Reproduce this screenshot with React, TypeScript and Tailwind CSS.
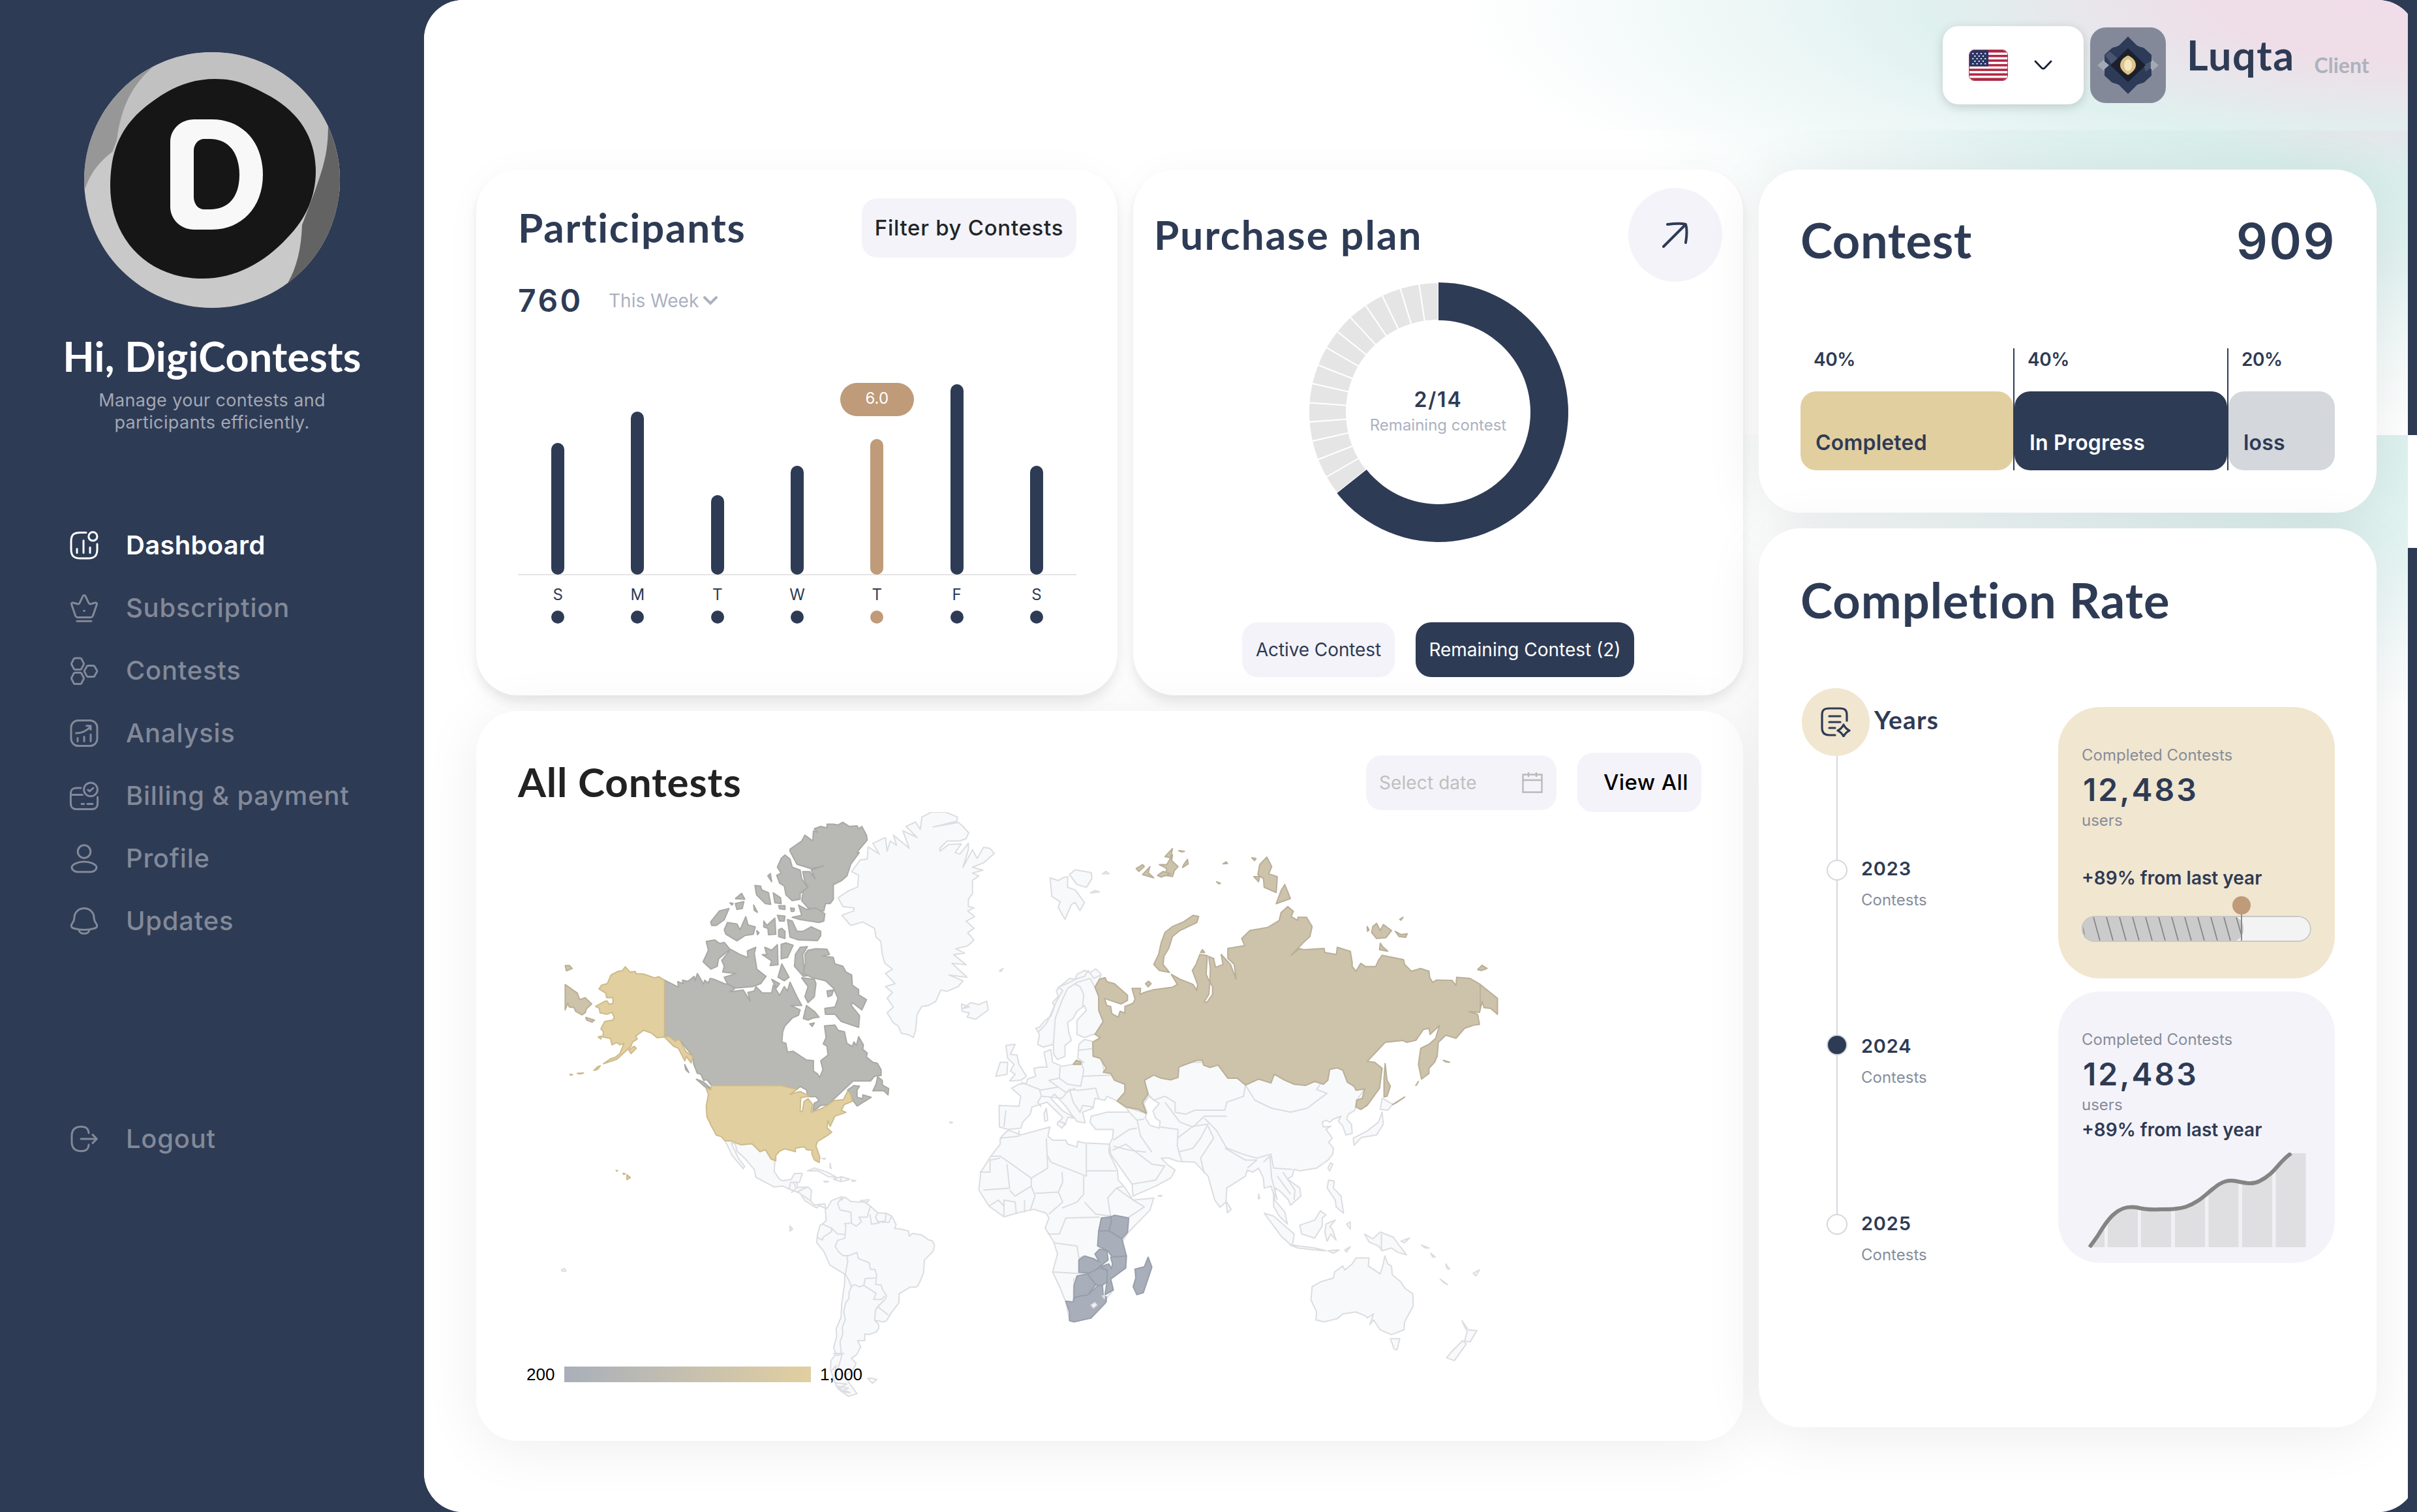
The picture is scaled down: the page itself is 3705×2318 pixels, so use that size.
import React from "react";

const NAVY = "#2e3b55";

/* ---------- Sidebar icons (24-unit grid) ---------- */
const iconShapes: Record<string, React.ReactNode> = {
  dashboard: (
    <>
      <path d="M13.5 2.2H9C4 2.2 2 4 2 9v6c0 5 2 7 7 7h6c5 0 7-2 7-7v-4" />
      <circle cx="18.7" cy="5.2" r="3.3" />
      <path d="M6.5 14.8v3M11.5 8.4v9.4M16.5 13.6v4.2" />
    </>
  ),
  subscription: (
    <>
      <path d="M17.2 19.2H6.8c-.6 0-1.1-.4-1.4-1L2.3 9.3c-.3-.9.4-1.5 1.2-1.3l3.2.9c.8.2 1.5-.1 1.9-.8l2.3-4.9c.5-1.3 1.7-1.3 2.2 0l2.3 4.9c.4.7 1.1 1 1.9.8l3.2-.9c.8-.2 1.5.4 1.2 1.3l-3.1 8.9c-.3.6-.8 1-1.4 1z" />
      <path d="M6.5 22.1h11M11.8 14.3h.4" />
    </>
  ),
  contests: (
    <>
      <path d="M5 2.5h4c.4 0 .7.2.9.5l1.7 3.3c.2.4.2.7 0 1.1L9.9 10.7c-.2.3-.5.5-.9.5H5c-.4 0-.7-.2-.9-.5L2.4 7.4c-.2-.4-.2-.7 0-1.1L4.1 3c.2-.3.5-.5.9-.5zM5 13.6h4c.4 0 .7.2.9.5l1.7 3.3c.2.4.2.7 0 1.1l-1.7 3.3c-.2.3-.5.5-.9.5H5c-.4 0-.7-.2-.9-.5l-1.7-3.3c-.2-.4-.2-.7 0-1.1l1.7-3.3c.2-.3.5-.5.9-.5zM15 8.2h4c.4 0 .7.2.9.5l1.9 3.2c.2.4.2.7 0 1.1l-1.9 3.3c-.2.3-.5.5-.9.5h-4c-.4 0-.7-.2-.9-.5L12.3 13c-.2-.4-.2-.7 0-1.1l1.8-3.2c.2-.3.5-.5.9-.5z" />
    </>
  ),
  analysis: (
    <>
      <rect x="2" y="2.2" width="20" height="19.6" rx="5.5" />
      <path d="M7 15.8v2.5M12 14.7v3.6M17 13v5.3M5.8 12c4.8-.1 8.5-2 11.2-5.2M13.8 6.4H17v2.8" />
    </>
  ),
  billing: (
    <>
      <path d="M9.5 6H6.5C3 6 1.7 7.3 1.7 10.8v6.7c0 3.5 1.3 4.8 4.8 4.8h11c3.5 0 4.8-1.3 4.8-4.8V13M1.7 11.2h9M10 18.3h1.8M14.5 18.3h4" />
      <circle cx="17" cy="7.2" r="5.2" />
      <path d="M14.9 7.4l1.3 1.2 2.8-2.6" />
    </>
  ),
  profile: (
    <>
      <circle cx="12" cy="6.8" r="4.9" />
      <path d="M12 14.5c4.5 0 9.5 2 9.5 4.4 0 1.9-2.5 3.5-4.5 3.5H7c-2 0-4.5-1.6-4.5-3.5 0-2.4 5-4.4 9.5-4.4z" />
    </>
  ),
  updates: (
    <>
      <path d="M12 2.3c-4.3 0-7.5 3.2-7.5 7 0 2.9-.9 3.4-2 5.1-.9 1.5-.2 2.7 1.5 3.2 5 1.5 11 1.5 16 0 1.7-.5 2.4-1.7 1.5-3.2-1.1-1.7-2-2.2-2-5.1 0-3.8-3.2-7-7.5-7z" />
      <path d="M8 18.8c.5 3.8 7.5 3.8 8 0" />
    </>
  ),
  logout: (
    <>
      <path d="M15.5 7.5c-.3-3.6-2.1-5.1-6.2-4.9C4.6 2.8 2.5 5 2.5 9.7v4.6c0 4.7 2.1 6.9 6.8 7.1 4.1.2 5.9-1.3 6.2-4.9" />
      <path d="M9.5 12h12M18.5 8.8l3.2 3.2-3.2 3.2" />
    </>
  ),
};

function NavItem({ icon, label, active }: { icon: string; label: string; active?: boolean }) {
  return (
    <a className={`flex h-12 items-center gap-[40px] ${active ? "text-white" : "text-[#828998]"}`}>
      <svg viewBox="0 0 24 24" className="size-12" fill="none" stroke="currentColor" strokeWidth="1.5" strokeLinecap="round" strokeLinejoin="round">
        {iconShapes[icon]}
      </svg>
      <span className={`text-[40px] leading-[48px] whitespace-nowrap ${active ? "font-semibold tracking-[0.3px]" : "font-medium tracking-[0.75px]"}`}>{label}</span>
    </a>
  );
}

function Sidebar() {
  const items = [
    ["dashboard", "Dashboard"],
    ["subscription", "Subscription"],
    ["contests", "Contests"],
    ["analysis", "Analysis"],
    ["billing", "Billing & payment"],
    ["profile", "Profile"],
    ["updates", "Updates"],
  ];
  return (
    <aside className="flex w-[650px] shrink-0 flex-col items-center">
      <svg viewBox="129 80 392 392" className="mt-20 size-[392px] shrink-0 overflow-hidden rounded-full">
        <rect x="129" y="80" width="392" height="392" fill="#c9c9c9" />
        <path d="M129 80H521V300L483 292L300 240L172 234Z" fill="#c1c1c1" />
        <path d="M110 60H260L235 102C205 128 186 160 179 215L172 233C155 246 140 262 131 288L110 290Z" fill="#979797" />
        <path d="M503 190C503 225 500 245 483 292L463 345C462 380 455 410 441 434L540 440V190Z" fill="#636363" />
        <path d="M330 121C365 121 385 132 415 148C462 175 484 215 484 263C484 300 470 335 440 365C405 403 360 427 311 427C225 427 169 365 169 285C169 225 190 190 225 162C258 136 290 121 330 121Z" fill="#161616" />
        <path fillRule="evenodd" fill="#f8f8f8" d="M298 183H325C370 183 403 216 403 268C403 318 370 352 325 352H298C277 352 261 336 261 317V218C261 198 277 183 298 183ZM313 213C304 213 297 221 297 231V302C297 313 304 321 313 321H322C350 321 367 302 367 268C367 234 350 213 322 213Z" />
      </svg>
      <h1 className="mt-[44px] font-[Lato,sans-serif] text-[63px] leading-[60px] font-bold tracking-[0.2px] whitespace-nowrap text-white">Hi, DigiContests</h1>
      <p className="mt-[21px] w-[380px] text-center text-[27px] leading-[34px] tracking-[0.35px] text-[#a3a8b3]">Manage your contests and participants efficiently.</p>
      <nav className="mt-[147px] flex w-full flex-col gap-12 pl-[105px]">
        {items.map(([icon, label], i) => (
          <NavItem key={label} icon={icon} label={label} active={i === 0} />
        ))}
      </nav>
      <div className="mt-[286px] w-full pl-[105px]">
        <NavItem icon="logout" label="Logout" />
      </div>
    </aside>
  );
}

/* ---------- Header ---------- */
function Flag() {
  return (
    <svg viewBox="0 0 60 57" preserveAspectRatio="none" className="h-12 w-[60px] rounded-lg border border-[#a8405a]">
      <rect width="60" height="57" fill="#fff" />
      {[0, 1, 2, 3, 4, 5, 6].map((i) => (
        <rect key={i} y={i * 8.77} width="60" height="4.4" fill="#b22542" />
      ))}
      <rect width="30" height="30.7" fill="#2a3566" />
      {[0, 1, 2, 3, 4].map((r) =>
        [0, 1, 2, 3].slice(0, r % 2 ? 3 : 4).map((c) => <circle key={`${r}${c}`} cx={5.5 + c * 6.5 + (r % 2) * 3.2} cy={6.5 + r * 4.8} r="1.3" fill="#fff" />),
      )}
    </svg>
  );
}

function Header() {
  return (
    <header className="flex h-[200px] items-center bg-[radial-gradient(ellipse_1500px_420px_at_3080px_0px,#f0dde9_0%,#efdde8_22%,#dff1ef_52%,#edf7f6_70%,#ffffff_100%)] pl-[2328px]">
      <button className="flex h-[120px] w-[216px] items-center gap-10 rounded-3xl bg-white pl-10 shadow-[0_4px_16px_rgba(0,0,0,0.16)]">
        <Flag />
        <svg viewBox="0 0 28 16" className="h-4 w-7" fill="none" stroke="#16213a" strokeWidth="2.8" strokeLinecap="round">
          <path d="M2 2l9.5 10c1.6 1.6 3.4 1.6 5 0L26 2" />
        </svg>
      </button>
      <div className="ml-[10px] flex size-[116px] items-center justify-center rounded-3xl bg-[#838999]">
        <svg viewBox="0 0 94 88" className="h-[88px] w-[94px]">
          <path d="M0 44l14-12 14 12-14 12zM66 44l14-12 14 12-14 12z" fill="#a5a9b5" />
          <path d="M47 0l13 13c3 3 9 3 12 5l11 10v10l-7 6 7 6v10L72 70c-3 2-9 2-12 5L47 88 34 75c-3-3-9-3-12-5L11 60V50l7-6-7-6V28l11-10c3-2 9-2 12-5z" fill="#2d3b58" />
          <path d="M12 29l7-6 14 12-10 9zM71 44l11-6v10l-8 6z" fill="#4a5670" />
          <path d="M47 18l27 26-27 26-27-26z" fill="#1b202c" />
          <path d="M47 29c7 3 12 8 12 15s-7 12-12 15c-5-3-12-8-12-15s5-12 12-15z" fill="#dfc386" />
          <ellipse cx="47" cy="44" rx="6" ry="9" fill="#f3e6c4" />
        </svg>
      </div>
      <div className="mb-[30px] ml-[32px] flex items-baseline gap-[30px] font-[Lato,sans-serif] font-bold">
        <span className="text-[63px] leading-[60px] tracking-[1.5px] text-[#2e3b55]">Luqta</span>
        <span className="relative top-1 text-[32px] leading-[40px] text-[#adb2bc]">Client</span>
      </div>
    </header>
  );
}

/* ---------- Participants ---------- */
const bars = [
  { d: "S", h: 202 },
  { d: "M", h: 250 },
  { d: "T", h: 122 },
  { d: "W", h: 167 },
  { d: "T", h: 208, tip: "6.0" },
  { d: "F", h: 292 },
  { d: "S", h: 167 },
];

function Participants() {
  return (
    <section className="h-[806px] w-[983px] rounded-[64px] bg-white pt-11 pr-[63px] pl-16 shadow-[0_10px_16px_rgba(0,0,0,0.08),0_4px_60px_rgba(0,0,0,0.03)]">
      <div className="flex items-center justify-between">
        <h2 className="-mt-1 font-[Lato,sans-serif] text-[62px] leading-[88px] font-bold tracking-[1.8px] text-[#2e3b55]">Participants</h2>
        <button className="h-[91px] w-[329px] rounded-3xl bg-[#f4f3f9] text-[33px] font-medium tracking-[0.7px] whitespace-nowrap text-[#212529]">Filter by Contests</button>
      </div>
      <div className="mt-[38px] flex h-14 items-center">
        <span className="w-[139px] text-[48px] font-semibold tracking-[3.5px] text-[#2e3b55]">760</span>
        <span className="text-[28px] whitespace-nowrap text-[#abb1bf]">This Week</span>
        <svg viewBox="0 0 24 16" className="ml-[6px] h-4 w-6" fill="none" stroke="#abb1bf" strokeWidth="4" strokeLinecap="round">
          <path d="M3 3l9 9 9-9" />
        </svg>
      </div>
      <div className="mt-[98px] flex h-[295px] items-end border-b-2 border-[#e5e5e5]">
        {bars.map((b, i) => (
          <div key={i} className="relative flex flex-1 flex-col items-center">
            {b.tip && <span className="absolute bottom-[242px] h-[51px] w-[113px] rounded-full bg-[#bf9b79] text-center text-[24px] leading-[48px] text-white">{b.tip}</span>}
            <div className={`-mb-[1px] w-5 rounded-full ${b.tip ? "bg-[#bf9b79]" : "bg-[#2e3b55]"}`} style={{ height: b.h }} />
          </div>
        ))}
      </div>
      <div className="mt-[14px] flex">
        {bars.map((b, i) => (
          <div key={i} className="flex flex-1 flex-col items-center gap-2">
            <span className="text-[24px] leading-8 text-[#2e3b55]">{b.d}</span>
            <span className={`size-5 rounded-full ${b.tip ? "bg-[#bf9b79]" : "bg-[#2e3b55]"}`} />
          </div>
        ))}
      </div>
    </section>
  );
}

/* ---------- Purchase plan ---------- */
function arc(a0: number, a1: number) {
  const p = (a: number, r: number) => {
    const t = ((a - 90) * Math.PI) / 180;
    return `${(200 + r * Math.cos(t)).toFixed(2)} ${(200 + r * Math.sin(t)).toFixed(2)}`;
  };
  const big = a1 - a0 > 180 ? 1 : 0;
  return `M${p(a0, 199)}A199 199 0 ${big} 1 ${p(a1, 199)}L${p(a1, 141)}A141 141 0 ${big} 0 ${p(a0, 141)}Z`;
}

function PurchasePlan() {
  const start = 231.43;
  const step = (360 - start) / 15;
  return (
    <section className="flex h-[806px] w-[935px] flex-col items-center rounded-[64px] bg-white pt-7 shadow-[0_10px_16px_rgba(0,0,0,0.08),0_4px_60px_rgba(0,0,0,0.03)]">
      <div className="flex w-full items-center justify-between pr-8 pl-8">
        <h2 className="-mt-[2px] font-[Lato,sans-serif] text-[62px] leading-[80px] font-bold tracking-[2.1px] whitespace-nowrap text-[#2e3b55]">Purchase plan</h2>
        <div className="flex size-36 items-center justify-center rounded-full bg-[#f4f3f9]">
          <svg viewBox="0 0 40 40" className="size-10" fill="none" stroke={NAVY} strokeWidth="4" strokeLinecap="round" strokeLinejoin="round">
            <path d="M2 38L36 4M8 4C20 2.500 30 2 36 4C38 10 38 20 36 32" />
          </svg>
        </div>
      </div>
      <div className="grid size-[400px] place-items-center">
        <svg viewBox="0 0 400 400" className="col-start-1 row-start-1 size-[400px]">
          {Array.from({ length: 15 }, (_, i) => (
            <path key={i} d={arc(start + i * step, start + (i + 1) * step)} fill="#e5e5e5" stroke="#fff" strokeWidth="2" />
          ))}
          <path d={arc(0, start)} fill={NAVY} />
        </svg>
        <div className="z-10 col-start-1 row-start-1 mt-[2px] text-center">
          <div className="text-[32px] leading-[38px] font-semibold tracking-[1.8px] text-[#2e3b55]">2/14</div>
          <div className="text-[24px] leading-[40px] text-[#abb1bf]">Remaining contest</div>
        </div>
      </div>
      <div className="mt-[122px] flex gap-8">
        <button className="h-[84px] w-[234px] rounded-3xl bg-[#f4f3f9] text-[28px] tracking-[-0.1px] whitespace-nowrap text-[#2e3b55]">Active Contest</button>
        <button className="h-[84px] w-[335px] rounded-3xl bg-[#2e3b55] text-[28px] whitespace-nowrap text-white">Remaining Contest (2)</button>
      </div>
    </section>
  );
}

/* ---------- World map ---------- */
const northAmerica = {
  land: [
    "1295,101 1340,101 1378,118 1375,132 1300,152 1380,136 1395,150 1413,172 1405,192 1385,200 1345,200 1322,225 1322,235 1350,212 1390,210 1370,240 1385,245 1412,208 1412,230 1395,290 1420,240 1425,230 1440,260 1460,222 1480,225 1494,243 1460,275 1425,290 1458,300 1425,310 1445,320 1425,335 1425,380 1412,400 1412,425 1430,430 1410,440 1432,460 1405,475 1430,500 1410,515 1430,540 1410,560 1372,570 1400,585 1365,590 1405,625 1360,620 1408,668 1350,660 1395,680 1380,700 1345,716 1325,712 1308,752 1285,765 1265,768 1250,795 1245,850 1238,875 1222,865 1200,860 1190,835 1175,825 1155,790 1175,770 1155,740 1172,720 1150,700 1180,690 1150,655 1172,640 1148,620 1140,590 1135,545 1120,530 1115,500 1078,478 1040,490 1012,455 1050,440 1050,430 1015,425 1000,395 1035,370 1062,358 1065,318 1043,305 1070,265 1092,262 1095,220 1130,245 1110,208 1150,188 1155,235 1165,200 1185,215 1175,180 1225,225 1205,165 1250,188 1215,150 1245,135 1260,160 1265,118",
    "1390,760 1415,770 1395,775 1420,755 1445,762 1470,750 1475,780 1435,812 1408,805 1415,790 1392,785",
    "643,1230 662,1230 692,1243 728,1240 753,1267 770,1260 788,1292 800,1298 798,1335 815,1362 825,1367 852,1362 862,1342 887,1342 878,1372 860,1373 845,1395 825,1385 798,1388 740,1355 735,1328 705,1290 680,1265 675,1240 662,1237 685,1290 705,1318 700,1325 665,1280",
    "845,1395 850,1372 870,1372 872,1390 905,1388 916,1400 913,1435 925,1450 958,1446 962,1462 940,1452 932,1460 895,1435 880,1410",
    "903,1333 925,1323 965,1337 995,1355 970,1353 935,1332",
    "985,1362 1010,1353 1037,1362 1010,1370",
    "955,1368 970,1370 960,1372",
    "1043,1364 1056,1367 1045,1369",
    "948,1290 960,1290 958,1293",
    "975,1307 978,1325 974,1320",
    "848,1523 856,1532 850,1538",
    "1353,1165 1362,1167 1356,1169",
    "1510,646 1522,638 1516,648",
    "1070,1435 1098,1432 1092,1442",
  ],
  lines: ["870,1390 852,1408", "870,1405 905,1388", "885,1415 912,1435", "860,1373 866,1390", "1010,1353 1008,1370"],
  usa: [
    "582,1048 597,1055 600,1040 820,1040 870,1053 848,1070 880,1060 910,1076 882,1082 880,1128 887,1130 892,1095 905,1085 920,1105 914,1132 945,1120 970,1105 985,1092 1017,1088 1030,1060 1038,1065 1046,1094 1020,1105 1010,1125 1025,1132 990,1145 975,1180 968,1160 965,1185 980,1200 965,1212 935,1232 930,1248 942,1285 940,1304 925,1295 917,1275 918,1262 900,1260 893,1250 865,1255 865,1267 832,1257 815,1265 803,1280 803,1298 788,1292 770,1260 753,1267 728,1240 692,1243 662,1230 643,1230 630,1215 615,1210 600,1180 585,1147 583,1110 590,1070",
    "451,678 433,666 420,670 385,657 362,656 358,648 342,650 327,632 318,645 303,648 282,660 270,690 252,695 244,708 265,722 268,738 288,738 288,758 275,760 270,750 263,750 233,768 245,775 247,790 270,795 285,788 292,805 288,815 262,820 250,845 258,855 256,873 280,878 285,900 300,892 310,900 323,895 310,930 295,943 280,948 258,965 300,950 345,905 350,890 365,880 360,870 385,850 410,860 428,876 451,873 480,905 495,912 515,955 520,940 535,962 541,940 520,925 497,880 485,888 467,872 451,870",
    "338,918 355,905 362,912 345,930",
    "228,988 240,975 248,972 240,984",
    "152,1001 160,1002 155,1005",
    "175,998 195,997 185,1000",
    "332,1346 343,1356 332,1363",
    "298,1331 303,1332 300,1334",
    "320,1341 327,1343 322,1345",
    "241,873 252,870 250,880",
  ],
  canada: [
    "451,678 495,702 493,683 510,690 508,678 525,682 545,665 548,680 555,655 575,692 578,678 590,688 595,672 608,675 640,690 665,695 672,708 658,718 700,712 722,750 715,720 735,715 740,700 760,722 790,722 795,695 815,730 830,700 840,715 848,685 870,735 885,765 850,765 880,780 875,798 855,808 832,835 825,855 822,890 835,895 840,925 858,922 900,952 922,954 922,990 935,1000 942,1012 952,985 945,955 968,935 965,905 953,897 962,875 957,835 990,832 1000,850 1020,855 1028,895 1045,905 1050,890 1058,902 1065,872 1080,900 1078,915 1092,928 1090,942 1110,960 1124,963 1136,985 1136,1005 1115,1008 1103,1024 1048,1024 985,1088 970,1105 945,1108 920,1130 925,1100 940,1092 930,1078 905,1078 900,1055 880,1043 870,1053 822,1042 600,1040 585,1020 575,1022 565,1000 555,998 543,965 541,940 497,880 485,888 467,872 451,870",
    "1015,136 1035,150 1060,148 1065,158 1075,150 1090,180 1092,197 1068,228 1060,240 1067,240 1040,280 1028,320 1010,337 985,350 985,400 975,415 960,415 955,440 920,438 905,430 885,405 890,370 905,358 895,340 888,305 910,305 928,330 915,300 955,285 915,295 870,280 848,235 848,228 885,200 895,180 920,200 922,165 935,170 925,158 945,150 965,155 965,142 985,142 1000,145",
    "832,248 848,262 855,290 880,300 885,330 903,360 880,380 880,400 855,405 835,385 830,355 815,345 806,318 820,310 808,290 820,260",
    "737,353 755,355 758,368 780,378 787,418 770,415 742,385",
    "795,378 818,395 820,415 800,412",
    "675,398 695,380 705,400",
    "675,415 702,408 697,432 680,435",
    "597,478 625,440 655,432 640,470 615,490 600,490",
    "640,505 650,480 680,485 690,505 708,460 715,488 738,495 732,520 705,525 680,543 645,520",
    "765,475 775,490 800,465 803,520 780,522 778,500 765,495",
    "840,470 855,475 870,510 890,510 915,495 945,510 945,525 935,542 875,540 848,530",
    "855,462 885,455 875,420 900,435 930,430 958,450 955,475 940,480 880,470",
    "808,455 832,458 830,475 815,475",
    "812,505 822,500 832,510 832,535 812,528",
    "778,320 786,312 790,340",
    "812,422 832,422 832,435 815,433",
    "733,420 745,445 735,438",
    "850,430 862,432 860,442 852,442",
    "658,412 668,415 664,420",
    "743,508 750,515 745,522",
    "583,545 610,540 625,552 640,548 658,572 622,605 618,630 598,640 573,615 590,575",
    "632,610 660,572 690,590 715,600 713,578 740,565 735,585 743,640 772,665 755,690 730,700 675,705 650,690 640,668 678,655 635,650 640,630",
    "760,590 775,590 768,565 790,575 808,556 810,625 785,628 790,612",
    "820,555 835,550 858,558 840,600 820,605",
    "822,622 845,668 830,680 810,668",
    "880,565 903,563 888,590 893,640 915,660 890,665 862,630 865,590",
    "905,575 930,570 965,572 973,590 950,595 985,600 990,622 1015,630 1025,650 1043,660 1045,695 1065,710 1065,728 1090,745 1075,780 1045,755 1042,765 1068,800 1065,840 1010,820 990,795 960,795 958,775 990,770 1000,740 985,705 960,680 920,670 890,655 897,620 895,590",
    "885,670 925,675 930,690 925,735 905,755 895,735 905,700",
    "900,765 925,785 940,805 920,808 905,815 890,810",
    "790,675 815,690 805,705",
    "965,715 985,712 980,730 968,735",
    "910,828 925,825 918,837",
    "1125,1010 1140,1022 1140,1038 1160,1050 1158,1072 1145,1058 1110,1058 1120,1035",
    "1030,1055 1050,1040 1068,1042 1060,1055 1060,1080 1078,1085 1078,1072 1105,1080 1060,1110 1050,1095",
    "552,1018 575,1028 598,1050 580,1045",
    "515,968 528,995 518,985",
  ],
  russia: ["137,693 175,722 183,745 200,738 221,760 205,775 200,790 190,797 170,785 165,772 150,770 145,757 137,780", "137,628 151,628 159,638 141,646", "202,806 230,815 222,822 205,815"],
};

const southAmerica = {
  land: [
    "1162,155 1175,122 1210,103 1207,120 1218,105 1237,125 1260,128 1282,128 1302,148 1325,178 1352,180 1370,192 1385,232 1380,250 1400,253 1425,262 1428,285 1438,273 1468,280 1490,302 1503,307 1510,330 1505,355 1477,395 1474,455 1458,508 1450,520 1430,520 1395,550 1394,592 1368,640 1355,672 1345,680 1315,672 1328,690 1329,708 1320,727 1295,738 1283,735 1283,766 1260,766 1270,795 1257,830 1240,848 1255,870 1245,900 1220,925 1232,960 1258,1010 1230,1022 1195,985 1185,955 1172,900 1173,860 1190,825 1182,800 1192,745 1190,712 1206,660 1208,600 1218,500 1218,460 1170,418 1150,355 1127,315 1130,275 1138,235 1145,230 1158,213 1155,162",
    "1293,940 1305,938 1322,945 1308,962",
    "1040,238 1048,252 1040,262",
    "298,440 308,434 313,446 300,446",
  ],
  lines: [
    "1145,230 1175,248 1195,275 1220,277 1218,295 1195,305 1187,333 1200,360 1213,375 1232,375 1258,360 1262,388 1298,408 1301,437 1316,438 1322,465 1318,508 1336,510 1342,533 1354,560 1350,575 1325,610 1360,648",
    "1220,277 1222,240 1218,228 1240,225 1238,175 1203,165 1195,135 1210,103",
    "1240,225 1255,240 1272,220 1265,198 1292,197 1295,175 1302,148",
    "1300,185 1305,230 1330,225 1318,200 1325,178",
    "1352,180 1350,215 1325,220 1362,222 1370,192",
    "1127,290 1145,303 1150,288 1175,265 1175,248",
    "1225,378 1228,400 1224,430 1220,460 1232,490 1240,518 1250,508 1265,518 1280,512 1285,480 1318,478",
    "1280,512 1320,548 1312,577 1337,577 1348,560",
    "1325,610 1318,625 1315,672",
    "1240,518 1232,545 1232,572 1222,590 1215,630 1220,670 1210,705 1212,735 1203,770 1208,840 1195,900",
    "1185,960 1225,965 1200,985 1235,1005 1205,1000 1230,985 1190,975",
    "1175,905 1190,880 1185,930",
    "1180,825 1215,825 1190,835",
  ],
};

const oldWorld = {
  land: [
    "240,615 250,612 265,595 280,585 290,560 285,550 300,535 295,520 305,510 330,490 345,492 350,480 370,470 385,476 400,466 415,480 410,492 398,512 408,535 408,570 420,598 400,628 370,638 350,630 350,595 375,570 370,558 350,572 340,590 325,600 328,625 335,645 318,658 318,685 298,693 288,680 287,655 260,662 245,655 250,630",
    "355,655 370,643 395,648 395,685 415,690 422,720 440,728 478,755 478,775 457,797 430,785 425,795 398,790 393,815 365,825 372,852 350,848 335,830 320,810 290,780 280,790 310,820 345,840 325,838 318,858 300,852 312,838 270,800 230,812 225,830 205,850 200,865 165,868 143,862 142,808 195,810 200,785 175,765 195,755 215,752 218,742 240,735 235,715 250,712 270,712 262,675 280,668 285,700 310,710 340,705 368,700 352,690",
    "160,658 185,655 172,680 190,682 195,705 215,735 200,745 170,747 185,730 172,722 182,705 165,690",
    "133,735 145,700 165,700 163,730",
    "535,828 525,800 540,780 530,745 600,700 1060,700 1125,720 1118,767 1097,795 1092,820 1075,830 1070,842 1083,855 1085,878 1068,882 1060,860 1048,848 1055,835 1035,842 1025,850 1015,845 1005,850 1008,862 1028,860 1015,868 1032,890 1022,900 1035,915 1033,930 1020,945 990,965 945,972 930,968 925,985 912,992 945,1015 948,1035 920,1058 915,1045 895,1025 880,1015 878,1045 905,1075 912,1105 890,1085 875,1060 875,1030 868,1010 850,1015 848,990 835,965 820,975 805,970 800,985 750,1015 748,1050 732,1063 718,1045 700,985 680,965 665,950 620,948 595,940 575,940 590,955 612,970 600,990 560,1010 500,1035 497,1005 440,930 437,905 445,890 447,868 400,868 385,850 388,835 430,825 490,825 480,812",
    "168,870 200,882 278,862 272,885 285,895 320,895 325,905 350,912 352,898 370,902 437,905 435,925 458,970 460,995 475,1010 500,1045 555,1040 545,1070 488,1125 470,1150 482,1190 480,1215 440,1243 447,1270 430,1290 425,1305 388,1340 342,1350 330,1345 320,1300 305,1265 285,1225 298,1180 288,1150 265,1115 275,1090 268,1078 235,1068 200,1075 155,1087 115,1060 88,1020 93,975 120,935 145,905 145,890 160,875",
    "748,1048 762,1068 752,1077",
    "850,1078 875,1085 930,1130 925,1160 895,1135",
    "918,1157 985,1165 1015,1172 985,1170 940,1165",
    "945,1108 985,1095 1000,1072 1015,1082 1005,1090 1005,1110 985,1140 950,1130",
    "1015,1105 1040,1095 1025,1112 1032,1118 1042,1145 1028,1130 1018,1148 1012,1125",
    "1118,1130 1140,1142 1160,1125 1195,1138 1210,1158 1230,1182 1205,1175 1190,1165 1165,1172 1155,1160 1130,1150",
    "1215,1148 1238,1140 1225,1152",
    "1022,995 1037,997 1035,1015 1055,1035 1062,1078 1042,1062 1040,1045 1018,1015",
    "1027,952 1033,955 1025,972 1020,965",
    "1165,790 1193,805 1180,820 1160,818",
    "1165,825 1168,855 1150,882 1110,888 1090,908 1088,890 1125,872 1155,850",
    "1378,1347 1395,1370 1418,1372 1400,1400 1385,1398 1392,1375",
    "1380,1397 1390,1405 1358,1447 1337,1440 1350,1425",
    "1172,1185 1180,1205 1190,1210 1192,1232 1215,1250 1225,1265 1247,1280 1248,1310 1225,1350 1223,1370 1190,1382 1160,1370 1142,1345 1132,1357 1142,1330 1125,1340 1120,1335 1095,1325 1060,1330 1045,1342 1010,1350 988,1345 990,1325 975,1295 978,1262 1000,1250 1035,1240 1038,1225 1060,1210 1065,1220 1085,1205 1095,1190 1130,1190 1128,1210 1160,1230 1168,1205",
    "1187,1392 1212,1392 1205,1420 1197,1418",
    "278,238 300,245 312,238 325,235 325,262 345,268 370,300 358,320 345,300 335,305 318,342 300,312 305,298 283,285",
    "330,230 345,218 388,225 390,240 375,262 350,255",
    "262,830 268,815 272,845 264,848",
    "300,848 318,853 310,865 297,855",
    "1270,1158 1290,1165 1280,1165",
    "1295,1178 1307,1188 1300,1188",
    "1335,1205 1345,1218 1338,1216",
    "1320,1243 1340,1257 1330,1252",
    "1408,1228 1425,1220 1415,1235",
    "418,228 428,222 436,228",
    "386,276 398,270 410,273",
    "835,1030 838,1040 835,1042",
    "567,1034 577,1034 572,1036",
    "1020,1172 1050,1170 1035,1178",
    "1065,1170 1080,1162 1070,1175",
    "1070,1105 1080,1100 1080,1118",
  ],
  lines: [
    "287,655 292,590 310,545 325,515 350,500 385,490 398,512",
    "365,562 368,530 358,510 345,505",
    "245,625 262,610 270,600 295,548 312,520 300,512 330,500 345,492 370,485 380,470 395,490 412,482",
    "200,750 250,768 255,785 245,800 255,812",
    "305,712 303,740 275,745 300,762 250,770",
    "303,740 325,755 360,760 368,720 362,702",
    "255,785 310,790 330,768 355,770 400,765 408,790",
    "160,820 155,862",
    "330,768 340,800 358,825 365,808 395,812",
    "365,735 440,732",
    "355,670 395,665",
    "300,762 320,775 345,765",
    "120,935 145,935 228,990 272,965 268,890",
    "272,935 280,950 375,985 375,905",
    "375,972 455,972",
    "145,890 195,885 195,870",
    "90,975 118,975 118,945 145,940",
    "163,955 170,1015 100,1020",
    "228,990 228,1010 185,1035 170,1020",
    "228,1010 238,1035 225,1070",
    "310,975 312,1000 300,1025 238,1028",
    "368,985 368,1030 350,1050 310,1065",
    "300,1025 312,1050 275,1080",
    "370,1050 400,1080 440,1085 432,1040 455,1015 475,1010",
    "455,1015 500,1045 530,1062 485,1090",
    "272,1130 303,1130 320,1090 410,1088",
    "288,1152 350,1160 355,1190 370,1185",
    "285,1225 375,1230",
    "340,1300 342,1240",
    "155,1085 155,1045 185,1050 188,1080",
    "210,1076 210,1045",
    "115,1060 140,1045 155,1060",
    "540,780 555,795 585,785 612,800 612,825 640,830 665,820 745,820 750,800 795,785 800,757",
    "585,800 625,850 660,862 690,835 750,835",
    "800,757 825,795 870,815 920,825 965,815 1000,790 1018,778 990,768 1000,755",
    "690,840 722,870 750,915 800,932 830,940 868,930 875,965 925,968",
    "510,842 520,885 550,925",
    "572,862 620,868 618,910 630,948",
    "618,890 660,860 700,855 680,890 660,915 620,925",
    "700,860 715,890 680,940 690,978",
    "447,895 490,868 510,865",
    "447,910 490,920 535,925",
    "445,920 480,905 550,955 585,960",
    "497,1005 560,995 585,958",
    "745,915 800,945 830,945 805,965",
    "848,950 865,935 870,990 885,1045",
    "885,985 920,1030",
    "900,975 932,1020 930,1045",
    "490,825 510,845 530,842",
    "1163,1130 1163,1170",
  ],
  russia: [
    "398,512 410,492 425,488 430,498 450,503 485,532 485,545 468,554 423,540 430,558 440,560 443,578 460,587 465,572 478,577 478,560 500,552 505,542 497,515 520,515 518,530 530,525 555,518 605,512 618,505 602,480 625,492 660,505 670,520 672,505 658,470 668,455 678,430 698,433 695,480 705,500 702,530 690,548 697,550 712,530 712,510 705,500 706,465 702,435 715,440 720,462 740,455 735,430 760,455 775,492 770,455 753,440 753,415 798,408 790,390 812,370 860,362 890,345 895,325 913,310 928,322 922,335 940,345 940,337 963,337 978,360 972,385 955,400 922,432 945,415 955,418 1010,415 1012,425 1043,430 1045,412 1080,422 1085,450 1085,460 1095,472 1108,452 1120,460 1148,460 1155,445 1165,432 1222,443 1225,455 1243,472 1268,465 1290,472 1292,488 1300,500 1310,494 1352,495 1362,508 1364,487 1400,490 1427,505 1460,530 1473,540 1473,580 1455,565 1437,563 1432,548 1425,575 1397,573 1420,580 1425,605 1410,607 1385,615 1362,640 1335,632 1315,650 1312,685 1305,700 1290,715 1290,728 1270,742 1262,705 1268,665 1290,655 1308,640 1318,608 1293,630 1290,615 1275,618 1255,645 1230,650 1220,645 1173,650 1125,698 1145,700 1165,715 1158,765 1125,808 1108,818 1095,812 1097,795 1112,790 1118,767 1095,770 1090,760 1072,750 1060,720 1045,714 1025,718 1020,745 1008,755 985,748 960,758 930,755 905,745 877,730 868,752 835,742 800,757 778,740 753,740 727,707 705,713 688,707 685,695 670,695 622,712 620,738 600,744 575,740 555,732 530,745 540,780 525,800 535,828 515,818 480,812 457,797 478,775 478,755 450,745 440,728 420,725 428,715 412,690 393,685 392,650 412,638 398,630 420,598 408,570 408,535",
    "1173,703 1178,745 1187,760 1178,785 1170,787 1170,740",
    "555,455 568,430 575,400 585,375 605,360 635,348 660,332 675,335 670,350 625,370 605,385 595,415 582,435 580,455 597,475 570,470",
    "857,186 870,210 862,228 885,235 882,275 850,262 848,240 833,230 838,205",
    "905,255 920,290 882,303 895,270",
    "822,235 838,235 835,248",
    "508,215 525,205 530,210 515,222",
    "525,230 545,210 540,225 555,238",
    "570,205 590,205 605,180 603,195 620,210 610,220 605,235 585,232 590,215",
    "585,185 605,165 600,188",
    "565,232 580,222 600,228 575,236",
    "622,170 637,172 628,173",
    "635,205 645,192 647,203 632,212",
    "740,203 748,198 752,202",
    "723,248 733,252 728,253",
    "817,188 828,190 824,195",
    "1140,360 1150,352 1160,370 1168,355 1190,370 1175,388 1150,390 1137,375",
    "1125,360 1130,368 1126,372",
    "1212,342 1221,337 1215,344",
    "1200,372 1215,380 1232,378 1228,387 1210,385",
    "1160,402 1168,412 1180,422 1158,418",
    "1420,468 1432,457 1445,465 1430,470",
    "340,705 348,695 360,699 360,705",
    "533,503 541,497 548,503 540,511",
    "1193,806 1225,787 1205,800",
    "1255,758 1262,748 1257,756",
    "1328,695 1345,700 1335,699",
    "680,425 685,418 691,425",
  ],
  africa: [
    "415,1090 440,1087 442,1100 435,1122 408,1122",
    "440,1087 450,1083 488,1090 485,1125 470,1142 435,1122 442,1100",
    "408,1122 435,1122 470,1142 482,1185 445,1188 432,1172 405,1160",
    "355,1195 370,1185 395,1192 410,1200 398,1180 410,1168 430,1172 433,1195 410,1212 390,1228 355,1226",
    "440,1188 482,1185 480,1215 440,1243 447,1270 425,1282 430,1250 430,1220 412,1212 435,1205 442,1217 445,1205",
    "378,1230 410,1215 430,1220 430,1250 415,1260 400,1257",
    "350,1235 378,1230 400,1257 378,1283 360,1285 342,1290 342,1260",
    "320,1298 340,1300 342,1290 360,1285 378,1283 405,1260 418,1258 420,1285 428,1287 428,1300 388,1340 342,1350 330,1347 330,1325",
    "540,1188 550,1213 527,1277 510,1282 500,1262 507,1240 505,1218 530,1212",
  ],
};

function Shapes({ list, fill, stroke }: { list: string[]; fill: string; stroke: string }) {
  return (
    <g fill={fill} stroke={stroke} strokeWidth="2">
      {list.map((p, i) => (
        <polygon key={i} points={p} vectorEffect="non-scaling-stroke" />
      ))}
    </g>
  );
}

function Lines({ list }: { list: string[] }) {
  return (
    <g fill="none" stroke="#dcdde0" strokeWidth="2">
      {list.map((p, i) => (
        <polyline key={i} points={p} vectorEffect="non-scaling-stroke" />
      ))}
    </g>
  );
}

function WorldMap() {
  const land = { fill: "#f8f9fb", stroke: "#dcdde0" };
  return (
    <svg viewBox="794 1245 1814 900" className="h-[900px] w-[1814px]" strokeLinejoin="round">
      <g transform="translate(1450 1200) scale(.57398 .61224)">
        <Shapes list={oldWorld.land} {...land} />
        <Lines list={oldWorld.lines} />
        <Shapes list={["543,785 555,795 570,803 553,822 560,840 572,848 570,865 545,858 532,838 537,825 528,803"]} fill="#fff" stroke="#dcdde0" />
        <Shapes list={oldWorld.russia} fill="#cdc2aa" stroke="#b9af97" />
        <line x1="1427" y1="505" x2="1427" y2="570" stroke="#b9af97" strokeWidth="3" />
        <Shapes list={oldWorld.africa} fill="#a9afba" stroke="#989eaa" />
        <Shapes list={["388,1308 398,1302 403,1308 394,1315", "418,1285 424,1284 423,1291"]} {...land} />
      </g>
      <g transform="translate(720 1800) scale(.47194 .33333)">
        <Shapes list={southAmerica.land} {...land} />
        <Lines list={southAmerica.lines} />
      </g>
      <g transform="translate(800 1200) scale(.48469 .44643)">
        <Shapes list={northAmerica.land} {...land} />
        <Lines list={northAmerica.lines} />
        <Shapes list={northAmerica.canada} fill="#b8b9b4" stroke="#a8a9a4" />
        <Shapes list={northAmerica.usa} fill="#e2cfa0" stroke="#cdbb8c" />
        <Shapes list={northAmerica.russia} fill="#cdc2aa" stroke="#b9af97" />
      </g>
    </svg>
  );
}

function AllContests() {
  return (
    <section className="h-[1119px] rounded-[64px] bg-white px-16 pt-16 shadow-[0_10px_90px_rgba(0,0,0,0.07)]">
      <div className="flex h-[91px] items-center">
        <h2 className="-mt-1 font-[Lato,sans-serif] text-[62px] leading-[80px] font-bold tracking-[0.8px] whitespace-nowrap text-[#222222]">All Contests</h2>
        <div className="ml-auto flex h-[84px] w-[292px] items-center justify-between rounded-3xl bg-[#f4f3f9] pr-[21px] pl-5 text-[28px] tracking-[0.1px] whitespace-nowrap text-[#bfbfbf]">
          Select date
          <svg viewBox="0 0 32 34" className="h-[34px] w-8" fill="none" stroke="#b9b9ba" strokeWidth="2.4">
            <path d="M1.5 4.5h29v27h-29zM1.5 13h29M10 1v7M22 1v7" />
          </svg>
        </div>
        <button className="ml-8 h-[91px] w-[190px] rounded-3xl bg-[#f4f3f9] pr-[20px] text-right text-[33px] font-medium tracking-[0.4px] whitespace-nowrap text-black">View All</button>
      </div>
      <div className="relative">
        <WorldMap />
        <div className="absolute bottom-[26px] left-[13px] flex h-6 items-center font-['Liberation_Sans',Arial,sans-serif] text-[26px] leading-6 text-black">
          <span className="w-[58px]">200</span>
          <span className="h-6 w-[378px] bg-linear-to-r from-[#a9afba] to-[#e2cfa0]" />
          <span className="ml-[14px]">1,000</span>
        </div>
      </div>
    </section>
  );
}

/* ---------- Contest summary ---------- */
function ContestSummary() {
  const parts = [
    { pct: "40%", label: "Completed", box: "w-[326px]", fill: "bg-[#e2cfa0] text-[#2e3b55]", rule: "" },
    { pct: "40%", label: "In Progress", box: "w-[328px]", fill: "bg-[#2e3b55] text-white", rule: "border-l-2 border-[#2e3b55]" },
    { pct: "20%", label: "loss", box: "w-[165px]", fill: "bg-[#d4d7dc] text-[#2e3b55]", rule: "border-l-2 border-[#2e3b55]" },
  ];
  return (
    <section className="h-[526px] rounded-[64px] bg-white px-16 pt-[66px] shadow-[0_10px_90px_rgba(0,0,0,0.08)]">
      <div className="-mt-[2px] flex items-center justify-between text-[#2e3b55]">
        <h2 className="font-[Lato,sans-serif] text-[74px] leading-[88px] font-bold tracking-[0.6px]">Contest</h2>
        <span className="-mr-[2px] pt-1 text-[75px] leading-[84px] font-semibold tracking-[2.5px]">909</span>
      </div>
      <div className="mt-[122px] flex">
        {parts.map((p) => (
          <div key={p.label} className={`${p.box} h-[187px] ${p.rule}`}>
            <div className="h-[66px] pl-5 text-[28px] leading-[34px] font-semibold tracking-[-0.4px] text-[#2e3b55]">{p.pct}</div>
            <div className={`flex h-[121px] items-end rounded-3xl pb-[22px] pl-[23px] text-[32px] leading-10 font-semibold tracking-[0.2px] whitespace-nowrap ${p.fill}`}>{p.label}</div>
          </div>
        ))}
      </div>
    </section>
  );
}

/* ---------- Completion rate ---------- */
const years = [
  { y: "2023", h: "h-[268px]", dot: "bg-white", text: "-mt-[2px]" },
  { y: "2024", h: "h-[275px]", dot: "bg-[#2e3b55]", text: "mt-[2px]" },
  { y: "2025", h: "h-8", dot: "bg-white", text: "-mt-[1px]" },
];

function Timeline() {
  return (
    <div className="w-[395px]">
      <div className="flex h-[104px] items-center gap-[7px] pl-[2px]">
        <div className="flex size-[104px] shrink-0 items-center justify-center rounded-full bg-[#f1e6cf]">
          <svg viewBox="0 0 46 46" className="size-[46px]" fill="none" stroke={NAVY} strokeWidth="3.2" strokeLinecap="round" strokeLinejoin="round">
            <path d="M40 21V12C40 5 37 2 30 2H13C5 2 2 5 2 12v20c0 8 4 11 11 11h9M13 14h17M13 23h17M13 32h9" />
            <path d="M35 27c2 4 4.500 7 9 9-4.500 2-7 5-9 9-2-4-4.500-7-9-9 4.500-2 7-5 9-9z" />
          </svg>
        </div>
        <h3 className="-mt-[8px] font-[Lato,sans-serif] text-[39px] font-bold tracking-[1.2px] text-[#2e3b55]">Years</h3>
      </div>
      <div className="ml-[55px] h-[159px] w-[2px] bg-[#d4d7dc]" />
      {years.map((t, i) => (
        <div key={t.y} className={`flex gap-[21px] pl-10 ${t.h}`}>
          <div className="flex h-full w-8 flex-col items-center">
            <div className={`size-8 shrink-0 rounded-full border-2 border-[#d4d7dc] ${t.dot}`} />
            {i < 2 && <div className="w-[2px] flex-1 bg-[#d4d7dc]" />}
          </div>
          <div className={t.text}>
            <div className="text-[29px] leading-8 font-semibold tracking-[0.8px] text-[#2e3b55]">{t.y}</div>
            <div className="mt-[17px] text-[24px] leading-[30px] text-[#868d9b]">Contests</div>
          </div>
        </div>
      ))}
    </div>
  );
}

const curve = "M2 145C8 137 10 134 15 127C24 112 32 100 40 94C50 85 60 82 74 84C86 87 95 88 110 87C125 87 138 87 150 83C170 76 180 64 192 55C205 44 215 41 228 44C242 47 252 49 262 44C277 37 285 27 292 19C299 11 304 6 311 1";

function StatCards() {
  const label = "text-[24px] leading-[30px] whitespace-nowrap text-[#868d9b]";
  const value = "pl-[2px] text-[48px] leading-[58px] font-semibold tracking-[3px] text-[#2e3b55]";
  const delta = "text-[28px] leading-9 font-semibold whitespace-nowrap text-[#2e3b55]";
  return (
    <div className="mt-[29px] flex w-[424px] flex-col gap-5">
      <div className="h-[416px] rounded-[64px] bg-[#f1e6cf] px-9 pt-[59px]">
        <div className={label}>Completed Contests</div>
        <div className={`mt-[9px] ${value}`}>12,483</div>
        <div className={`mt-[3px] ${label}`}>users</div>
        <div className={`mt-[55px] ${delta}`}>+89% from last year</div>
        <div className="relative mt-[40px] w-[352px]">
          <svg viewBox="0 0 352 40" className="h-10 w-[352px] rounded-[20px]">
            <rect width="352" height="40" fill="#f3f3f3" />
            <path d="M0 0H228Q248 2 248 20T228 40H0Z" fill="#cbcbcb" />
            <path d="M-2 2L6 38M18 2L28 38M38 2L48 38M58 2L68 38M78 2L88 38M98 2L108 38M118 2L128 38M138 2L148 38M158 2L168 38M178 2L188 38M198 2L208 38M218 2L228 38M237 2L245 30" stroke="#868686" strokeWidth="1.800" />
            <rect x="1" y="1" width="350" height="38" rx="19" fill="none" stroke="#c8c8c8" strokeWidth="2" />
          </svg>
          <div className="absolute bottom-[2px] left-[231px] flex flex-col items-center">
            <span className="size-7 rounded-full bg-[#bf9b79]" />
            <span className="h-[40px] w-[2px] bg-[#8a8a8a]" />
          </div>
        </div>
      </div>
      <div className="h-[416px] rounded-[64px] bg-[#f4f3f9] px-9 pt-[59px]">
        <div className={label}>Completed Contests</div>
        <div className={`mt-[9px] ${value}`}>12,483</div>
        <div className={`mt-[3px] ${label}`}>users</div>
        <div className={`mt-[5px] ${delta}`}>+89% from last year</div>
        <svg viewBox="0 0 334 146" className="mt-[17px] ml-[10px] h-[146px] w-[334px]">
          <defs>
            <clipPath id="area">
              <path d={`${curve}H334V145H0Z`} />
            </clipPath>
          </defs>
          <g clipPath="url(#area)">
            <rect width="334" height="145" fill="#f1f0f4" />
            {[-21, 30, 81, 133, 184.5, 236, 287.5].map((x) => (
              <rect key={x} x={x} width="46" height="145" fill="#dfdfe1" />
            ))}
          </g>
          <path d={curve} fill="none" stroke="#848484" strokeWidth="6" />
        </svg>
      </div>
    </div>
  );
}

function CompletionRate() {
  return (
    <section className="h-[1378px] rounded-[64px] bg-white px-16 pt-[66px] shadow-[0_10px_90px_rgba(0,0,0,0.08)]">
      <h2 className="font-[Lato,sans-serif] text-[74px] leading-[88px] font-bold tracking-[1px] whitespace-nowrap text-[#2e3b55]">Completion Rate</h2>
      <div className="mt-[91px] flex items-start">
        <Timeline />
        <StatCards />
      </div>
    </section>
  );
}

export default function App() {
  return (
    <div className="flex h-[2318px] w-[3705px] overflow-hidden bg-[#2e3b55] font-[Inter,sans-serif]">
      <Sidebar />
      <div className="flex w-[3041px] shrink-0 overflow-hidden">
        <main className="h-full w-[3055px] shrink-0 overflow-hidden rounded-[60px] bg-white">
          <Header />
          <div className="h-full bg-[radial-gradient(ellipse_1200px_420px_at_3120px_10px,#ddf1ef_0%,#e0f3f1_35%,#f3fafa_70%,#ffffff_100%),radial-gradient(ellipse_1300px_640px_at_3080px_-180px,#efdde8_0%,#e9e2ea_24%,#d9efec_40%,#e1f2f0_58%,#f3faf9_80%,#ffffff_100%)] bg-[size:100%_1651px,100%_467px] bg-[position:0_467px,0_0] bg-no-repeat pt-[60px] pl-20">
            <div className="flex gap-6">
              <div className="flex w-[1942px] flex-col gap-6">
                <div className="flex gap-6">
                  <Participants />
                  <PurchasePlan />
                </div>
                <AllContests />
              </div>
              <div className="flex w-[947px] flex-col gap-6">
                <ContestSummary />
                <CompletionRate />
              </div>
            </div>
          </div>
        </main>
      </div>
      <div className="h-full w-[14px] shrink-0 pt-[667px]">
        <div className="h-[173px] bg-white" />
      </div>
    </div>
  );
}
